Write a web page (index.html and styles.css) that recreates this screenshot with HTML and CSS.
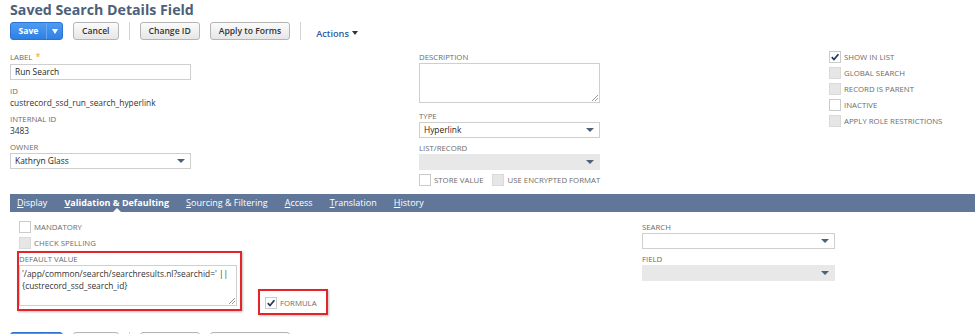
FILE: index.html
```html
<!DOCTYPE html>
<html>
<head>
<meta charset="utf-8">
<title>Saved Search Details Field</title>
<link rel="stylesheet" href="styles.css">
</head>
<body>
<div class="page">
  <h1 class="title">Saved Search Details Field</h1>

  <div class="toolbar">
    <div class="btn-split"><span class="btn-main">Save</span><span class="btn-arrow"><svg width="6" height="5" viewBox="0 0 6 5"><path d="M0 0 H6 L3 5 Z" fill="#fff"/></svg></span></div>
    <span class="btn">Cancel</span>
    <span class="sep"></span>
    <span class="btn">Change ID</span>
    <span class="btn">Apply to Forms</span>
    <span class="sep"></span>
    <span class="actions">Actions<svg class="caret" width="6" height="4" viewBox="0 0 6 4"><path d="M0 0 H6 L3 4 Z" fill="#333"/></svg></span>
  </div>

  <div class="main">
    <div class="col">
      <div class="flabel">LABEL <span class="req">*</span></div>
      <div class="input input-first">Run Search</div>
      <div class="flabel gap6">ID</div>
      <div class="fvalue">custrecord_ssd_run_search_hyperlink</div>
      <div class="flabel gap6">INTERNAL ID</div>
      <div class="fvalue">3483</div>
      <div class="flabel gap6">OWNER</div>
      <div class="select">Kathryn Glass<span class="arrow"></span></div>
    </div>

    <div class="col">
      <div class="flabel">DESCRIPTION</div>
      <div class="textarea desc"><span class="grip"></span></div>
      <div class="flabel gap8">TYPE</div>
      <div class="select">Hyperlink<span class="arrow"></span></div>
      <div class="flabel gap5">LIST/RECORD</div>
      <div class="select select-dis"><span class="arrow"></span></div>
      <div class="cbrow-inline">
        <span class="cbitem"><span class="cb"></span>STORE VALUE</span>
        <span class="cbitem"><span class="cb cb-dis"></span>USE ENCRYPTED FORMAT</span>
      </div>
    </div>

    <div class="col col-checks">
      <div class="cbline"><span class="cb"><svg width="10" height="10" viewBox="0 0 10 10"><path d="M1.8 5.2 L4 7.5 L8.4 2.2" fill="none" stroke="#24385b" stroke-width="1.8"/></svg></span>SHOW IN LIST</div>
      <div class="cbline"><span class="cb cb-dis"></span>GLOBAL SEARCH</div>
      <div class="cbline"><span class="cb cb-dis"></span>RECORD IS PARENT</div>
      <div class="cbline"><span class="cb"></span>INACTIVE</div>
      <div class="cbline"><span class="cb cb-dis"></span>APPLY ROLE RESTRICTIONS</div>
    </div>
  </div>

  <div class="tabbar">
    <span class="tab"><u>D</u>isplay</span>
    <span class="tab tab-active"><u>V</u>alidation &amp; Defaulting<span class="notch"></span></span>
    <span class="tab"><u>S</u>ourcing &amp; Filtering</span>
    <span class="tab"><u>A</u>ccess</span>
    <span class="tab"><u>T</u>ranslation</span>
    <span class="tab"><u>H</u>istory</span>
  </div>

  <div class="tabcontent">
    <div class="tcol">
      <div class="cbline"><span class="cb"></span>MANDATORY</div>
      <div class="cbline"><span class="cb cb-dis"></span>CHECK SPELLING</div>
      <div class="defrow">
        <div class="redbox defbox">
          <div class="flabel">DEFAULT VALUE</div>
          <div class="textarea deftext">'/app/common/search/searchresults.nl?searchid=' ||<br>{custrecord_ssd_search_id}<span class="grip"></span></div>
        </div>
        <div class="redbox formbox">
          <div class="cbline"><span class="cb"><svg width="10" height="10" viewBox="0 0 10 10"><path d="M1.8 5.2 L4 7.5 L8.4 2.2" fill="none" stroke="#24385b" stroke-width="1.8"/></svg></span>FORMULA</div>
        </div>
      </div>
    </div>
    <div class="tcol tcol-right">
      <div class="flabel">SEARCH</div>
      <div class="select"><span class="arrow"></span></div>
      <div class="flabel gap5">FIELD</div>
      <div class="select select-dis"><span class="arrow"></span></div>
    </div>
  </div>

  <div class="toolbar toolbar-bottom">
    <div class="btn-split"><span class="btn-main">Save</span><span class="btn-arrow"><svg width="6" height="5" viewBox="0 0 6 5"><path d="M0 0 H6 L3 5 Z" fill="#fff"/></svg></span></div>
    <span class="btn">Cancel</span>
    <span class="sep"></span>
    <span class="btn">Change ID</span>
    <span class="btn">Apply to Forms</span>
  </div>
</div>
</body>
</html>
```

FILE: styles.css
```css
html, body {
  margin: 0;
  padding: 0;
  overflow: hidden;
  background: #fff;
}
body {
  font-family: "Open Sans", "Liberation Sans", sans-serif;
  color: #333;
  font-size: 8.4px;
}
.page {
  width: 975px;
}
.title {
  margin: 0;
  padding-left: 10px;
  font-size: 14.2px;
  font-weight: 700;
  color: #4d5f79;
  line-height: 20px;
  height: 20px;
}

/* toolbar */
.toolbar {
  display: flex;
  align-items: center;
  margin-top: 2px;
  padding-left: 10px;
  height: 18px;
}
.toolbar-bottom {
  margin-top: 17px;
}
.btn-split {
  display: flex;
  height: 18px;
  box-sizing: border-box;
  border: 1px solid #2b72d3;
  border-radius: 3px;
  background: linear-gradient(#4d9cf2, #2f80e6);
  color: #fff;
  font-weight: 700;
  font-size: 8.6px;
  margin-right: 10px;
}
.btn-main {
  width: 35px;
  display: flex;
  align-items: center;
  justify-content: center;
  border-right: 1px solid #6aa9f0;
}
.btn-arrow {
  width: 15px;
  display: flex;
  align-items: center;
  justify-content: center;
}
.btn {
  height: 18px;
  box-sizing: border-box;
  border: 1px solid #b5b5b5;
  border-radius: 3px;
  background: linear-gradient(#fbfbfb, #e6e6e6);
  color: #333;
  font-weight: 600;
  font-size: 8.6px;
  display: flex;
  align-items: center;
  padding: 0 8px;
  margin-right: 10px;
}
.sep {
  width: 1px;
  height: 18px;
  background: #d3d3d3;
  margin-right: 10px;
}
.actions {
  margin-left: 5px;
  color: #2d5b9f;
  font-weight: 600;
  font-size: 9.2px;
  display: flex;
  align-items: center;
  margin-top: 4px;
}
.caret {
  margin-left: 3px;
}

/* main fields */
.main {
  display: grid;
  grid-template-columns: 409px 410px 1fr;
  padding-left: 10px;
  margin-top: 12px;
}
.col {
  display: flex;
  flex-direction: column;
  align-items: flex-start;
}
.flabel {
  font-size: 7.8px;
  color: #6b6b6b;
  line-height: 10px;
  height: 10px;
  white-space: nowrap;
}
.req {
  color: #f0a010;
  font-size: 9px;
  margin-left: 1px;
}
.gap5 { margin-top: 5px; }
.gap6 { margin-top: 6px; }
.gap8 { margin-top: 8px; }
.fvalue {
  margin-top: 1px;
  line-height: 11px;
  height: 11px;
  color: #333;
}
.input {
  margin-top: 2px;
  width: 181px;
  height: 16px;
  box-sizing: border-box;
  border: 1px solid #cfcfcf;
  padding-left: 4px;
  line-height: 14px;
  color: #262626;
}
.select {
  position: relative;
  margin-top: 1px;
  width: 181px;
  height: 16px;
  box-sizing: border-box;
  border: 1px solid #cfcfcf;
  padding-left: 4px;
  line-height: 14px;
  color: #262626;
  background: #fff;
}
.select-dis {
  background: #e8e8e8;
  border-color: #e8e8e8;
}
.arrow {
  position: absolute;
  right: 5px;
  top: 5px;
  width: 0;
  height: 0;
  border-left: 4px solid transparent;
  border-right: 4px solid transparent;
  border-top: 4px solid #4d5f79;
}
.textarea {
  position: relative;
  margin-top: 1px;
  box-sizing: border-box;
  border: 1px solid #cfcfcf;
  background: #fff;
}
.desc {
  width: 181px;
  height: 40px;
}
.grip {
  position: absolute;
  right: 1px;
  bottom: 1px;
  width: 6px;
  height: 6px;
  background: linear-gradient(135deg, transparent 45%, #999 45%, #999 55%, transparent 55%, transparent 70%, #999 70%, #999 80%, transparent 80%);
}
.cbrow-inline {
  display: flex;
  align-items: center;
  margin-top: 4px;
  height: 12px;
}
.cbitem {
  display: flex;
  align-items: center;
  font-size: 7.8px;
  color: #6b6b6b;
  margin-right: 9px;
}
.cb {
  width: 12px;
  height: 12px;
  box-sizing: border-box;
  border: 1px solid #cbcbcb;
  background: #fff;
  margin-right: 3px;
  display: flex;
  align-items: center;
  justify-content: center;
  flex: none;
}
.cb-dis {
  background: #e6e6e6;
  border-color: #dadada;
}
.col-checks {
  margin-top: -3px;
}
.cbline {
  display: flex;
  align-items: center;
  height: 16px;
  font-size: 7.8px;
  color: #6b6b6b;
  white-space: nowrap;
}

/* tabs */
.tabbar {
  margin-top: 8px;
  margin-left: 10px;
  height: 18px;
  background: #607799;
  display: flex;
  align-items: center;
  padding-left: 7px;
  gap: 17px;
}
.tab {
  position: relative;
  color: #fff;
  font-size: 9px;
  line-height: 18px;
  white-space: nowrap;
}
.tab-active {
  font-weight: 700;
}
.notch {
  position: absolute;
  left: 50%;
  bottom: 0;
  margin-left: -4px;
  width: 0;
  height: 0;
  border-left: 4px solid transparent;
  border-right: 4px solid transparent;
  border-bottom: 4px solid #fff;
}

/* tab content */
.tabcontent {
  display: grid;
  grid-template-columns: 623px 193px;
  padding-left: 19px;
  margin-top: 7px;
}
.tcol {
  display: flex;
  flex-direction: column;
  align-items: flex-start;
}
.tcol-right {
  margin-top: 3px;
}
.tcol-right .select {
  width: 193px;
}
.defrow {
  display: flex;
  align-items: flex-start;
}
.redbox {
  box-sizing: border-box;
  border: 2px solid #e3242b;
  box-shadow: 1px 1px 2px rgba(0,0,0,0.25);
}
.defbox {
  margin-left: -2px;
  width: 225px;
  padding: 1px 3px 3px 0;
}
.deftext {
  width: 218px;
  height: 41px;
  padding: 2px 0 0 2px;
  line-height: 12px;
  color: #333;
}
.formbox {
  margin-left: 16px;
  margin-top: 38px;
  width: 70px;
  height: 26px;
  padding: 4px 0 0 5px;
}
```
